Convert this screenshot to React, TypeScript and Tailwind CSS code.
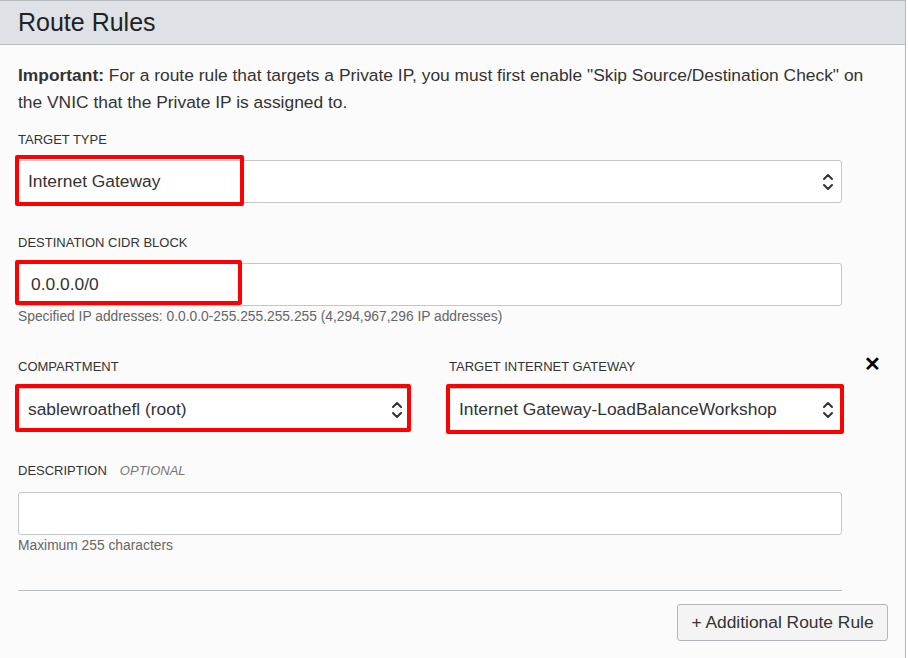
import React from "react";

const Chevrons = () => (
  <svg width="12" height="20" viewBox="0 0 12 20" fill="none" stroke="#333" strokeWidth="2" strokeLinecap="round" strokeLinejoin="round">
    <path d="M2 7 L6 3 L10 7" />
    <path d="M2 13 L6 17 L10 13" />
  </svg>
);

const Label = ({ children }: { children: React.ReactNode }) => (
  <div className="h-[20px] text-[13px] leading-[20px] text-[#333] uppercase">{children}</div>
);

const Highlight = ({ className }: { className: string }) => (
  <div className={"pointer-events-none absolute border-[4px] border-[#ff0000] rounded-[2px] " + className} />
);

const SelectBox = ({ value }: { value: string }) => (
  <div className="flex h-[43px] items-center justify-between rounded-[3px] border border-[#c3c7cc] bg-white pl-[9px] pr-[7px] text-[17.4px] text-[#333]">
    <span>{value}</span>
    <Chevrons />
  </div>
);

export default function App() {
  return (
    <div className="h-[658px] w-[908px] bg-white font-['Liberation_Sans',Arial,sans-serif]">
      <div className="h-[658px] w-[906px] border-t border-r border-[#b3b8bd] bg-[#fbfbfb]">
        <div className="flex h-[44px] items-center border-b border-[#b8bdc2] bg-[#dee2e6] px-[18px] text-[25px] text-[#222]">
          Route Rules
        </div>
        <div className="px-[18px] pt-[17px]">
          <p className="w-[860px] text-[17.4px] leading-[27px] text-[#333]">
            <span className="font-bold">Important:</span> For a route rule that targets a Private IP, you must first enable "Skip Source/Destination Check" on the VNIC that the Private IP is assigned to.
          </p>

          <div className="mt-[14px] w-[824px]">
            <Label>TARGET TYPE</Label>
            <div className="relative mt-[10px]">
              <SelectBox value="Internet Gateway" />
              <Highlight className="-left-[3px] -top-[5px] h-[51px] w-[229px]" />
            </div>
          </div>

          <div className="mt-[30px] w-[824px]">
            <Label>DESTINATION CIDR BLOCK</Label>
            <div className="relative mt-[10px]">
              <div className="flex h-[43px] items-center rounded-[3px] border border-[#c3c7cc] bg-white pl-[12px] text-[17.4px] text-[#333]">
                0.0.0.0/0
              </div>
              <Highlight className="-left-[3px] -top-[3px] h-[45px] w-[227px]" />
            </div>
            <div className="mt-[3px] text-[13.8px] leading-[16px] text-[#666]">
              Specified IP addresses: 0.0.0.0-255.255.255.255 (4,294,967,296 IP addresses)
            </div>
          </div>

          <div className="relative mt-[32px] flex w-[824px] gap-[38px]">
            <div className="w-[393px]">
              <Label>COMPARTMENT</Label>
              <div className="relative mt-[11px]">
                <SelectBox value="sablewroathefl (root)" />
                <Highlight className="-left-[3px] -top-[4px] h-[48px] w-[396px]" />
              </div>
            </div>
            <div className="w-[393px]">
              <Label>TARGET INTERNET GATEWAY</Label>
              <div className="relative mt-[11px]">
                <SelectBox value="Internet Gateway-LoadBalanceWorkshop" />
                <Highlight className="-left-[3px] -top-[4px] h-[50px] w-[398px]" />
              </div>
            </div>
            <span className="absolute -right-[39px] top-[-3px] text-[20px] font-bold leading-[20px] text-black">✕</span>
          </div>

          <div className="mt-[30px] w-[824px]">
            <div className="flex h-[20px] items-center gap-[13px] text-[13px] leading-[20px]">
              <span className="text-[#333]">DESCRIPTION</span>
              <span className="italic text-[#777]">OPTIONAL</span>
            </div>
            <div className="mt-[11px] h-[43px] rounded-[3px] border border-[#c3c7cc] bg-white" />
            <div className="mt-[3px] text-[13.8px] leading-[16px] text-[#666]">Maximum 255 characters</div>
          </div>

          <div className="mt-[36px] w-[824px] border-t border-[#b8bdc2]" />

          <div className="mt-[13px] flex justify-end">
            <button className="mr-[-1px] h-[37px] w-[211px] rounded-[3px] border border-[#b3b7bc] bg-[#f4f4f4] text-[17.4px] text-[#333]">
              + Additional Route Rule
            </button>
          </div>
        </div>
      </div>
    </div>
  );
}
